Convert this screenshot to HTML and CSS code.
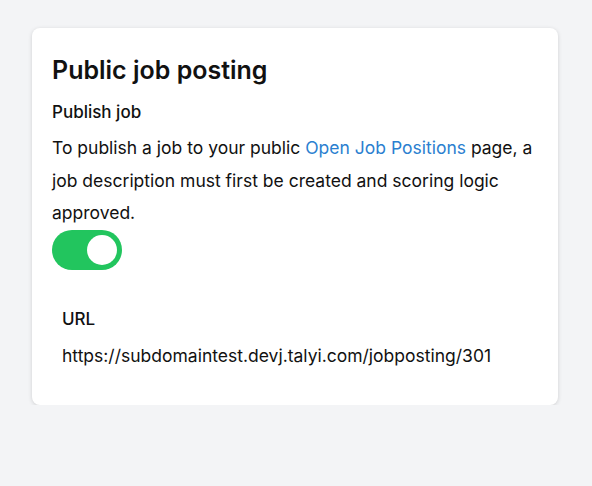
FILE: index.html
```html
<!DOCTYPE html>
<html lang="en">
<head>
    <meta charset="UTF-8">
    <meta name="viewport" content="width=device-width, initial-scale=1.0">
    <title>Public job posting</title>
    <link rel="stylesheet" href="styles.css">
</head>
<body>
    <div class="card">
        <h2>Public job posting</h2>
        <h3>Publish job</h3>
        <p class="desc">To publish a job to your public <a href="#">Open Job Positions</a> page, a job description must first be created and scoring logic approved.</p>
        <label class="switch">
            <input type="checkbox" checked>
            <span class="slider"></span>
        </label>
        <div class="url-box">
            <div class="url-label">URL</div>
            <div class="url-value">https://subdomaintest.devj.talyi.com/jobposting/301</div>
        </div>
    </div>
</body>
</html>
```

FILE: styles.css
```css
body {
    font-family: Inter, "Noto Sans", sans-serif;
    margin: 0;
    padding: 28px 34px 0 32px;
    background-color: #f3f4f6;
    color: #111;
}

.card {
    background: #fff;
    border-radius: 8px;
    box-shadow: 0 1px 4px rgba(0, 0, 0, 0.15);
    padding: 24px 20px 37px 20px;
}

h2 {
    margin: 0 0 12px 0;
    font-size: 25px;
    font-weight: 600;
    line-height: 36px;
}

h3 {
    margin: 0 0 8px 0;
    font-size: 17px;
    font-weight: 500;
    line-height: 24px;
}

.desc {
    margin: 0;
    font-size: 17.5px;
    line-height: 32.5px;
}

.desc a {
    color: #2b7fd0;
    text-decoration: none;
}

.switch {
    display: block;
    width: 70px;
    height: 40px;
}

.switch input {
    display: none;
}

.slider {
    display: flex;
    align-items: center;
    justify-content: flex-end;
    width: 100%;
    height: 100%;
    padding: 0 5px;
    box-sizing: border-box;
    background: #22c55e;
    border-radius: 20px;
}

.slider::after {
    content: "";
    width: 30px;
    height: 30px;
    border-radius: 50%;
    background: #fff;
}

.url-box {
    padding: 37px 10px 0 10px;
}

.url-label {
    font-size: 17px;
    font-weight: 500;
    line-height: 24px;
}

.url-value {
    margin-top: 13px;
    font-size: 17.5px;
    line-height: 24px;
}
```
